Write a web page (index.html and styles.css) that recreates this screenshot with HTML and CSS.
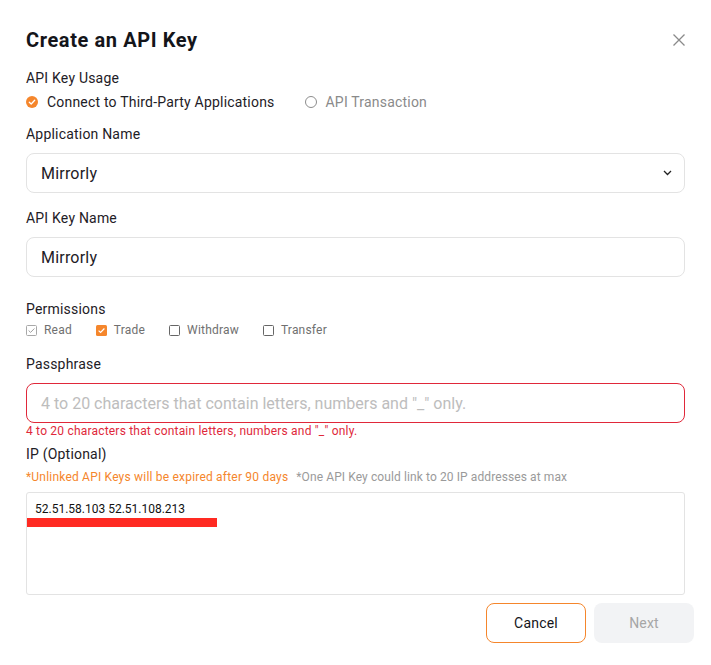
FILE: index.html
```html
<!DOCTYPE html>
<html lang="en">
<head>
<meta charset="utf-8">
<title>Create an API Key</title>
<link rel="stylesheet" href="styles.css">
</head>
<body>
<div class="dialog">
  <div class="header">
    <h1 class="title">Create an API Key</h1>
    <svg class="close" width="12" height="12" viewBox="0 0 12 12"><path d="M0.5 0.5 L11.5 11.5 M11.5 0.5 L0.5 11.5" stroke="#8a8a8a" stroke-width="1.3" fill="none"/></svg>
  </div>

  <div class="label l-usage">API Key Usage</div>
  <div class="radios">
    <label class="radio">
      <svg width="12" height="12" viewBox="0 0 12 12"><circle cx="6" cy="6" r="6" fill="#f5862c"/><path d="M3.3 6.2 L5.2 8 L8.7 4.3" stroke="#fff" stroke-width="1.3" fill="none" stroke-linecap="round" stroke-linejoin="round"/></svg>
      <span class="radio-text on">Connect to Third-Party Applications</span>
    </label>
    <label class="radio">
      <svg width="12" height="12" viewBox="0 0 12 12"><circle cx="6" cy="6" r="5.5" fill="#fff" stroke="#8c8c8c" stroke-width="1"/></svg>
      <span class="radio-text off">API Transaction</span>
    </label>
  </div>

  <div class="label l-app">Application Name</div>
  <div class="field select">
    <span class="value">Mirrorly</span>
    <svg class="chev" width="9" height="6" viewBox="0 0 9 6"><path d="M1 1 L4.5 4.5 L8 1" stroke="#222" stroke-width="1.3" fill="none"/></svg>
  </div>

  <div class="label l-name">API Key Name</div>
  <div class="field"><span class="value">Mirrorly</span></div>

  <div class="label l-perm">Permissions</div>
  <div class="checks">
    <label class="check">
      <svg width="11" height="11" viewBox="0 0 11 11"><rect x="0.5" y="0.5" width="10" height="10" rx="1" fill="#fff" stroke="#a8a8a8"/><path d="M2.6 5.5 L4.6 7.4 L8.4 3.5" stroke="#a0a0a0" stroke-width="1" fill="none"/></svg>
      <span>Read</span>
    </label>
    <label class="check">
      <svg width="11" height="11" viewBox="0 0 11 11"><rect x="0" y="0" width="11" height="11" rx="1.5" fill="#f5862c"/><path d="M2.6 5.6 L4.6 7.5 L8.4 3.5" stroke="#fff" stroke-width="1.2" fill="none"/></svg>
      <span>Trade</span>
    </label>
    <label class="check">
      <svg width="11" height="11" viewBox="0 0 11 11"><rect x="0.5" y="0.5" width="10" height="10" rx="1" fill="#fff" stroke="#666"/></svg>
      <span>Withdraw</span>
    </label>
    <label class="check">
      <svg width="11" height="11" viewBox="0 0 11 11"><rect x="0.5" y="0.5" width="10" height="10" rx="1" fill="#fff" stroke="#666"/></svg>
      <span>Transfer</span>
    </label>
  </div>

  <div class="label l-pass">Passphrase</div>
  <div class="field error"><span class="placeholder">4 to 20 characters that contain letters, numbers and "_" only.</span></div>
  <div class="err-msg">4 to 20 characters that contain letters, numbers and "_" only.</div>

  <div class="label l-ip">IP (Optional)</div>
  <div class="note"><span class="warn">*Unlinked API Keys will be expired after 90 days</span><span class="hint">*One API Key could link to 20 IP addresses at max</span></div>
  <div class="ipbox">
    <div class="ips">52.51.58.103 52.51.108.213</div>
    <div class="redact"></div>
  </div>

  <div class="actions">
    <button class="btn cancel">Cancel</button>
    <button class="btn next">Next</button>
  </div>
</div>
</body>
</html>
```

FILE: styles.css
```css
* { box-sizing: border-box; }
html, body { margin: 0; padding: 0; background: #fff; }
body {
  font-family: Roboto, "Liberation Sans", sans-serif;
  color: #1e2026;
  width: 711px;
  letter-spacing: 0.2px;
}
.dialog {
  padding: 24px 26px 0 26px;
}
.header {
  display: flex;
  justify-content: space-between;
  align-items: center;
  height: 32px;
}
.title {
  margin: 0;
  font-size: 20px;
  font-weight: 700;
  line-height: 32px;
  letter-spacing: 0.6px;
  color: #14151a;
}
.close { display: block; }

.label {
  font-size: 14px;
  line-height: 20px;
  color: #1e2026;
}
.l-usage { margin-top: 12px; }
.l-app { margin-top: 12px; }
.l-name { margin-top: 15px; }
.l-perm { margin-top: 22px; }
.l-pass { margin-top: 15px; }
.l-ip { margin-top: 5px; }

.radios {
  display: flex;
  gap: 30px;
  margin-top: 4px;
  height: 20px;
  align-items: center;
}
.radio {
  display: flex;
  align-items: center;
  gap: 9px;
  font-size: 14px;
  line-height: 20px;
}
.radio svg { display: block; }
.radio-text.on { color: #1e2026; }
.radio-text.off { color: #8a8a8a; }

.field {
  margin-top: 9px;
  height: 40px;
  border: 1px solid #e3e3e3;
  border-radius: 8px;
  display: flex;
  align-items: center;
  padding: 0 14px;
  font-size: 16px;
  letter-spacing: 0;
}
.field .value { color: #1e2026; letter-spacing: 0.2px; }
.select { justify-content: space-between; padding-right: 12px; }
.chev { display: block; }
.field.error { border-color: #e0283a; }
.placeholder { color: #bdbdbd; }

.checks {
  display: flex;
  gap: 24px;
  margin-top: 2px;
  height: 18px;
  align-items: center;
}
.check {
  display: flex;
  align-items: center;
  gap: 7px;
  font-size: 12px;
  color: #707070;
}
.check svg { display: block; }

.err-msg {
  font-size: 12px;
  line-height: 16px;
  color: #e0283a;
}

.note {
  margin-top: 5px;
  font-size: 12px;
  line-height: 16px;
}
.warn { color: #f5862c; }
.hint { color: #9a9a9a; margin-left: 8px; letter-spacing: 0.1px; }

.ipbox {
  margin-top: 7px;
  height: 103px;
  border: 1px solid #e3e3e3;
  border-radius: 3px;
  padding: 8px 8px;
}
.ips {
  font-size: 12px;
  line-height: 16px;
  color: #111;
  letter-spacing: 0;
}
.redact {
  margin-top: 1px;
  margin-left: -8px;
  width: 190px;
  height: 9px;
  background: #ff2a22;
}

.actions {
  display: flex;
  justify-content: flex-end;
  gap: 8px;
  margin-top: 8px;
  margin-right: -9px;
}
.btn {
  width: 100px;
  height: 40px;
  border-radius: 8px;
  font-family: inherit;
  font-size: 14px;
  letter-spacing: 0.2px;
  cursor: pointer;
}
.cancel {
  background: #fff;
  border: 1px solid #f5862c;
  color: #14151a;
}
.next {
  background: #f2f3f5;
  border: none;
  color: #a6a6a6;
}
```
